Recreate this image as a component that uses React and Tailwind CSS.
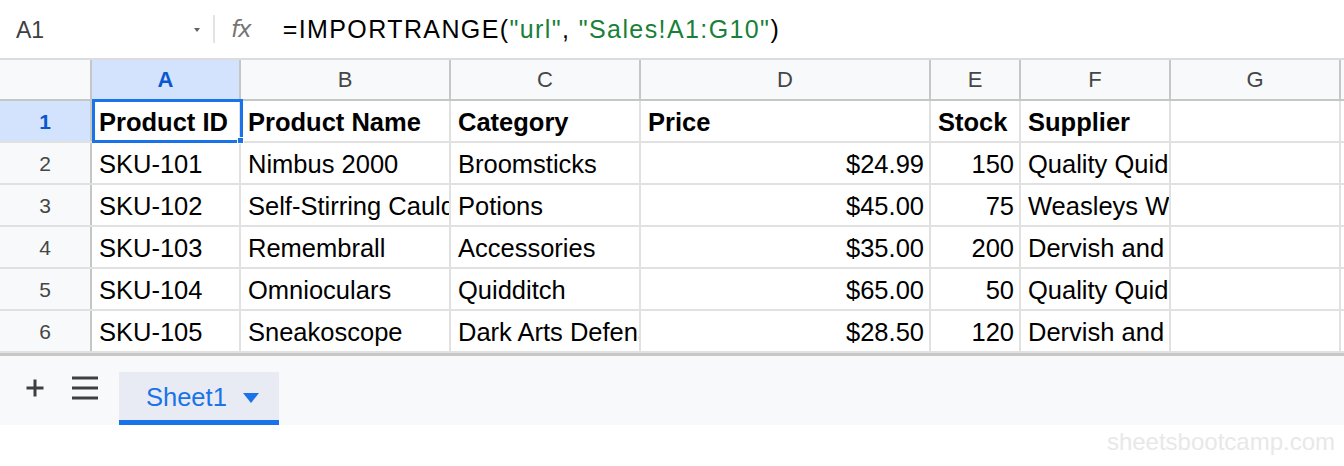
import React from 'react';

const columns = [
  { key: 'A', width: 'w-[149px]' },
  { key: 'B', width: 'w-[210px]' },
  { key: 'C', width: 'w-[190px]' },
  { key: 'D', width: 'w-[290px]' },
  { key: 'E', width: 'w-[90px]' },
  { key: 'F', width: 'w-[150px]' },
  { key: 'G', width: 'w-[170px]' },
];

const rows = [
  ['Product ID', 'Product Name', 'Category', 'Price', 'Stock', 'Supplier', ''],
  ['SKU-101', 'Nimbus 2000', 'Broomsticks', '$24.99', '150', 'Quality Quidditch Supplies', ''],
  ['SKU-102', 'Self-Stirring Cauldron', 'Potions', '$45.00', '75', 'Weasleys Wizard Wheezes', ''],
  ['SKU-103', 'Remembrall', 'Accessories', '$35.00', '200', 'Dervish and Banges', ''],
  ['SKU-104', 'Omnioculars', 'Quidditch', '$65.00', '50', 'Quality Quidditch Supplies', ''],
  ['SKU-105', 'Sneakoscope', 'Dark Arts Defense', '$28.50', '120', 'Dervish and Banges', ''],
];

const numericCols = [3, 4];

const FormulaBar = () => (
  <div className="flex items-center h-[58px] bg-white">
    <div className="w-[213px] flex items-center justify-between pl-[16px] pr-[12px]">
      <span className="text-[23px] text-[#3c4043] mt-[2px]">A1</span>
      <svg width="8" height="6" viewBox="0 0 8 6" className="mt-[1px]">
        <path d="M1 1h6L4 5z" fill="#5f6368" />
      </svg>
    </div>
    <div className="w-[2px] h-[28px] bg-[#e3e3e3]" />
    <span className="ml-[16px] text-[23px] italic text-[#757575] font-['DejaVu_Sans',sans-serif] tracking-[-1px]">fx</span>
    <div className="ml-[32px] mt-[2px] text-[25px] tracking-[1.4px] text-black whitespace-nowrap">
      =IMPORTRANGE(<span className="text-[#188038]">"url"</span>, <span className="text-[#188038]">"Sales!A1:G10"</span>)
    </div>
  </div>
);

const HeaderRow = () => (
  <div className="flex h-[43px] border-t-2 border-b-2 border-t-[#dadce0] border-b-[#c4c7c5] bg-[#f8f9fa]">
    <div className="w-[92px] shrink-0 border-r-2 border-[#c4c7c5]" />
    {columns.map((c, i) => (
      <div
        key={c.key}
        className={`${c.width} shrink-0 flex items-center justify-center border-r-2 border-[#c4c7c5] text-[22px] ${
          i === 0 ? 'bg-[#d3e3fd] text-[#0b57d0] font-bold' : 'text-[#444746]'
        }`}
      >
        {c.key}
      </div>
    ))}
    <div className="flex-1" />
  </div>
);

const DataRow = ({ cells, index }) => {
  const isFirst = index === 0;
  return (
    <div className="flex h-[42px] border-b-2 border-[#e1e1e1]">
      <div
        className={`w-[92px] shrink-0 flex items-center justify-center border-r-2 border-[#c4c7c5] text-[21px] pt-[2px] ${
          isFirst ? 'bg-[#d3e3fd] text-[#0b57d0] font-bold' : 'bg-[#f8f9fa] text-[#444746]'
        }`}
      >
        {index + 1}
      </div>
      {columns.map((c, i) => (
        <div
          key={c.key}
          className={`${c.width} shrink-0 flex items-center border-r-2 border-[#e1e1e1] overflow-hidden whitespace-nowrap text-[25.5px] text-black pl-[7px] pr-[5px] pt-[3px] ${
            isFirst ? 'font-bold' : ''
          } ${!isFirst && numericCols.includes(i) ? 'justify-end' : ''}`}
        >
          {cells[i]}
        </div>
      ))}
      <div className="flex-1" />
    </div>
  );
};

const Footer = () => (
  <div className="flex items-end h-[72px] bg-[#f8f9fa] border-t-[3px] border-[#c7c7c7]">
    <div className="flex items-center h-[56px] pl-[25px]">
      <svg width="20" height="20" viewBox="0 0 20 20" className="-mt-[18px]">
        <path d="M10 1.5v17M1.5 10h17" stroke="#3c4043" strokeWidth="3" />
      </svg>
      <svg width="28" height="26" viewBox="0 0 28 26" className="ml-[26px] -mt-[18px]">
        <path d="M1 3h26M1 13h26M1 23h26" stroke="#3c4043" strokeWidth="3" />
      </svg>
      <div className="ml-[20px] w-[160px] h-[53px] bg-[#e8ebf4] border-b-[5px] border-[#1a73e8] flex items-center pl-[27px] -mb-[3px]">
        <span className="text-[25.5px] font-medium text-[#1a73e8] mt-[3px]">Sheet1</span>
        <svg width="16" height="10" viewBox="0 0 16 10" className="ml-[16px] mt-[3px]">
          <path d="M0 0h16L8 10z" fill="#1a73e8" />
        </svg>
      </div>
    </div>
  </div>
);

export default function App() {
  return (
    <div className="w-[1344px] h-[466px] bg-white overflow-hidden font-['Liberation_Sans',Arial,sans-serif]">
      <FormulaBar />
      <div className="relative">
        <HeaderRow />
        {rows.map((r, i) => (
          <DataRow key={i} cells={r} index={i} />
        ))}
        <div className="absolute left-[92px] top-[41px] w-[151px] h-[44px] border-[3px] border-[#1a73e8] pointer-events-none">
          <div className="absolute right-[-4px] bottom-[-4px] w-[7px] h-[7px] bg-[#1a73e8] border border-white" />
        </div>
      </div>
      <Footer />
      <div className="flex justify-end pr-[9px] -mt-[1px]">
        <span className="text-[24px] text-[#e8e8e8]">sheetsbootcamp.com</span>
      </div>
    </div>
  );
}
